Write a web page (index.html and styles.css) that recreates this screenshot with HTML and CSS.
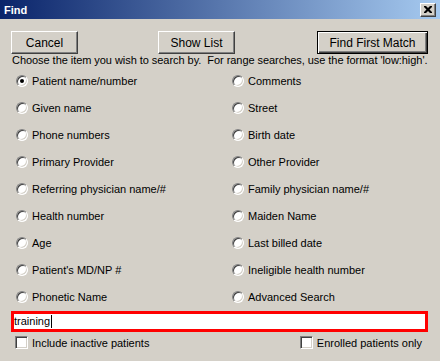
FILE: index.html
```html
<!DOCTYPE html>
<html lang="en">
<head>
    <meta charset="UTF-8">
    <title>Find</title>
    <link rel="stylesheet" href="styles.css">
</head>
<body>
    <div class="dialog">
        <div class="titlebar">
            <span class="title">Find</span>
            <span class="close">
                <svg width="8" height="7" viewBox="0 0 8 7">
                    <path d="M0 0h2l2 2 2-2h2v1l-2.5 2.5 2.5 2.5v1h-2l-2-2-2 2h-2v-1l2.5-2.5-2.5-2.5z" fill="#000"/>
                </svg>
            </span>
        </div>

        <div class="content">
            <div class="actions">
                <button class="btn btn-cancel">Cancel</button>
                <button class="btn btn-list">Show List</button>
                <button class="btn btn-default">Find First Match</button>
            </div>

            <p class="hint">Choose the item you wish to search by.&nbsp; For range searches, use the format 'low:high'.</p>

            <div class="options">
                <label class="option"><span class="radio checked"></span>Patient name/number</label>
                <label class="option"><span class="radio"></span>Comments</label>
                <label class="option"><span class="radio"></span>Given name</label>
                <label class="option"><span class="radio"></span>Street</label>
                <label class="option"><span class="radio"></span>Phone numbers</label>
                <label class="option"><span class="radio"></span>Birth date</label>
                <label class="option"><span class="radio"></span>Primary Provider</label>
                <label class="option"><span class="radio"></span>Other Provider</label>
                <label class="option"><span class="radio"></span>Referring physician name/#</label>
                <label class="option"><span class="radio"></span>Family physician name/#</label>
                <label class="option"><span class="radio"></span>Health number</label>
                <label class="option"><span class="radio"></span>Maiden Name</label>
                <label class="option"><span class="radio"></span>Age</label>
                <label class="option"><span class="radio"></span>Last billed date</label>
                <label class="option"><span class="radio"></span>Patient's MD/NP #</label>
                <label class="option"><span class="radio"></span>Ineligible health number</label>
                <label class="option"><span class="radio"></span>Phonetic Name</label>
                <label class="option"><span class="radio"></span>Advanced Search</label>
            </div>

            <div class="search">training<span class="caret"></span></div>

            <div class="checks">
                <label class="check"><span class="box"></span>Include inactive patients</label>
                <label class="check check-right"><span class="box"></span>Enrolled patients only</label>
            </div>
        </div>
    </div>
</body>
</html>
```

FILE: styles.css
```css
body {
    margin: 0;
    background: #d4d0c8;
    font-family: 'Liberation Sans', Arial, sans-serif;
    font-size: 11px;
    color: #000;
}

.dialog {
    width: 440px;
    height: 361px;
    overflow: hidden;
}

.titlebar {
    height: 19px;
    display: flex;
    align-items: center;
    justify-content: space-between;
    background: linear-gradient(to right, #0a246a, #a6caf0);
    padding: 0 4px 0 4px;
}

.title {
    color: white;
    font-weight: bold;
    font-size: 11px;
}

.close {
    width: 14px;
    height: 12px;
    display: flex;
    align-items: center;
    justify-content: center;
    background: #d4d0c8;
    border: 1px solid;
    border-color: #fff #404040 #404040 #fff;
    box-shadow: inset -1px -1px #808080;
}

.content {
    padding-top: 12px;
}

.actions {
    display: flex;
    padding-left: 11px;
}

.btn {
    height: 23px;
    background: #d4d0c8;
    border: 1px solid;
    border-color: #fff #404040 #404040 #fff;
    box-shadow: inset -1px -1px #808080;
    font-family: inherit;
    font-size: 12px;
    color: #000;
    padding: 0;
}

.btn-cancel {
    width: 67px;
    margin-right: 80px;
}

.btn-list {
    width: 77px;
    margin-right: 82px;
}

.btn-default {
    width: 111px;
    border: 1px solid #000;
    box-shadow: inset 1px 1px #fff, inset -1px -1px #404040, inset -2px -2px #808080;
}

.hint {
    margin: 0 0 0 12px;
    line-height: 13px;
    white-space: nowrap;
    letter-spacing: -0.05px;
}

.options {
    display: grid;
    grid-template-columns: 216px 1fr;
    grid-auto-rows: 27px;
    padding-left: 16px;
}

.option {
    display: flex;
    align-items: center;
    gap: 4px;
}

.radio {
    width: 10px;
    height: 10px;
    border-radius: 50%;
    background: #fff;
    border: 1px solid;
    border-color: #808080 #fff #fff #808080;
    box-shadow: inset 1px 1px #404040, inset -1px -1px #d4d0c8;
    display: flex;
    align-items: center;
    justify-content: center;
}

.radio.checked::after {
    content: "";
    width: 4px;
    height: 4px;
    border-radius: 50%;
    background: #000;
}

.search {
    margin: 1px 0 0 11px;
    width: 411px;
    height: 15px;
    border: 3px solid #ff0000;
    background: #fff;
    line-height: 15px;
    display: flex;
    align-items: center;
}

.caret {
    width: 1px;
    height: 13px;
    background: #000;
    margin-left: 1px;
}

.checks {
    display: flex;
    justify-content: space-between;
    padding: 4px 18px 0 15px;
}

.check {
    display: flex;
    align-items: center;
    gap: 4px;
}

.box {
    width: 11px;
    height: 11px;
    background: #fff;
    border: 1px solid;
    border-color: #808080 #fff #fff #808080;
    box-shadow: inset 1px 1px #404040, inset -1px -1px #d4d0c8;
}
```
